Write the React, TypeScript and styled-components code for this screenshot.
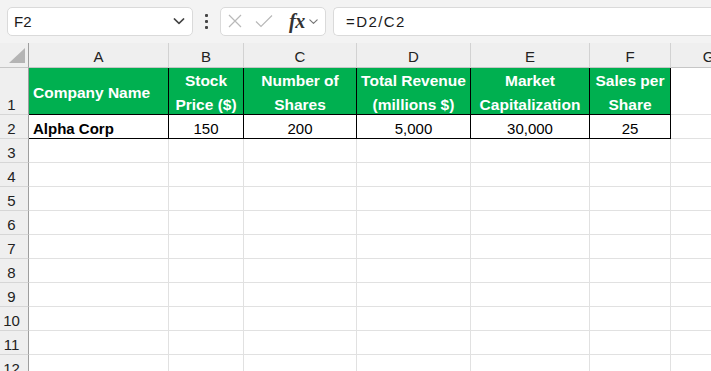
import React from "react";
import styled, { createGlobalStyle } from "styled-components";

const GlobalStyle = createGlobalStyle`
  html, body {
    margin: 0;
    padding: 0;
    background: #ffffff;
    overflow: hidden;
  }
  body {
    font-family: "Liberation Sans", Arial, sans-serif;
    color: #000000;
  }
`;

const Page = styled.div`
  width: 711px;
  height: 371px;
  overflow: hidden;
  background: #ffffff;
`;

const TopBar = styled.div`
  display: flex;
  align-items: center;
  height: 43px;
  padding: 0 0 1px 7px;
  box-sizing: border-box;
  background: #f3f3f3;
`;

const NameBox = styled.div`
  display: flex;
  align-items: center;
  justify-content: space-between;
  width: 186px;
  height: 29px;
  box-sizing: border-box;
  padding: 0 6px 0 6px;
  background: #ffffff;
  border: 1px solid #dadada;
  border-radius: 5px;
  font-size: 15px;
  color: #1a1a1a;
`;

const MoreDots = styled.div`
  display: flex;
  flex-direction: column;
  align-items: center;
  gap: 3px;
  width: 27px;
  > span {
    width: 3px;
    height: 3px;
    background: #444;
    border-radius: 1px;
  }
`;

const FuncBox = styled.div`
  display: flex;
  align-items: center;
  width: 106px;
  height: 29px;
  box-sizing: border-box;
  padding: 0 0 0 6px;
  background: #ffffff;
  border: 1px solid #dadada;
  border-radius: 5px;
`;

const FxLabel = styled.span`
  font-family: "Liberation Serif", "DejaVu Serif", serif;
  font-style: italic;
  font-weight: bold;
  font-size: 20px;
  color: #333333;
  margin-left: 15px;
  margin-right: 3px;
  letter-spacing: -0.5px;
`;

const FormulaInput = styled.div`
  flex: 1;
  display: flex;
  align-items: center;
  height: 29px;
  margin-left: 7px;
  box-sizing: border-box;
  padding-left: 12px;
  background: #ffffff;
  border: 1px solid #dadada;
  border-right: none;
  border-radius: 5px 0 0 5px;
  font-size: 15px;
  color: #1a1a1a;
  letter-spacing: 1.4px;
`;

const Sheet = styled.div`
  display: grid;
  grid-template-columns: 29px 140px 75px 113px 114px 119px 81px 76px;
  grid-template-rows: 25px 47px repeat(11, 24px);
  overflow: hidden;
`;

const Corner = styled.div`
  position: relative;
  background: #efefef;
  border-right: 1px solid #9e9e9e;
  border-bottom: 1px solid #c6c6c6;
  box-sizing: border-box;
`;

const CornerTriangle = styled.div`
  position: absolute;
  right: 3px;
  bottom: 4px;
  width: 0;
  height: 0;
  border-left: 16px solid transparent;
  border-bottom: 15px solid #b4b4b4;
`;

const ColHead = styled.div`
  display: flex;
  align-items: center;
  justify-content: center;
  background: #efefef;
  border-right: 1px solid #d2d2d2;
  border-bottom: 1px solid #c6c6c6;
  box-sizing: border-box;
  font-size: 15px;
  color: #222222;
  padding-top: 2px;
`;

const RowHead = styled.div<{ $bottom?: boolean }>`
  display: flex;
  align-items: ${(p) => (p.$bottom ? "flex-end" : "center")};
  justify-content: center;
  padding-bottom: ${(p) => (p.$bottom ? "1px" : "0")};
  padding-top: ${(p) => (p.$bottom ? "0" : "4px")};
  padding-right: 5px;
  background: #efefef;
  border-right: 1px solid #9e9e9e;
  border-bottom: 1px solid #d6d6d6;
  box-sizing: border-box;
  font-size: 15px;
  color: #222222;
`;

const Cell = styled.div<{
  $kind?: "head" | "data" | "empty";
  $align?: "left" | "center";
}>`
  display: flex;
  align-items: center;
  justify-content: ${(p) => (p.$align === "left" ? "flex-start" : "center")};
  text-align: ${(p) => (p.$align === "left" ? "left" : "center")};
  padding: ${(p) => (p.$align === "left" ? "4px 0 0 4px" : "4px 0 0 0")};
  box-sizing: border-box;
  font-size: ${(p) => (p.$kind === "head" ? "15.5px" : "15px")};
  line-height: 24px;
  white-space: nowrap;
  overflow: hidden;
  background: ${(p) => (p.$kind === "head" ? "#00b050" : "#ffffff")};
  color: ${(p) => (p.$kind === "head" ? "#ffffff" : "#000000")};
  font-weight: ${(p) => (p.$kind === "head" ? "bold" : "normal")};
  border-right: 1px solid
    ${(p) => (p.$kind === "empty" ? "#e1e1e1" : "#000000")};
  border-bottom: 1px solid
    ${(p) => (p.$kind === "empty" ? "#e1e1e1" : "#000000")};
`;

const Bold = styled.span`
  font-weight: bold;
`;

const columns = ["A", "B", "C", "D", "E", "F", "G"];

const headers: string[][] = [
  ["Company Name"],
  ["Stock", "Price ($)"],
  ["Number of", "Shares"],
  ["Total Revenue", "(millions $)"],
  ["Market", "Capitalization"],
  ["Sales per", "Share"],
];

const dataRow = ["Alpha Corp", "150", "200", "5,000", "30,000", "25"];

function Chevron({ size = 12, color = "#555" }: { size?: number; color?: string }) {
  return (
    <svg width={size} height={size} viewBox="0 0 12 12" fill="none">
      <path d="M2 4.2 L6 8 L10 4.2" stroke={color} strokeWidth="1.3" strokeLinecap="round" strokeLinejoin="round" />
    </svg>
  );
}

export default function App() {
  const emptyRows = Array.from({ length: 10 }, (_, i) => i + 3);

  return (
    <Page>
      <GlobalStyle />
      <TopBar>
        <NameBox>
          <span>F2</span>
          <Chevron size={14} color="#444" />
        </NameBox>
        <MoreDots>
          <span />
          <span />
          <span />
        </MoreDots>
        <FuncBox>
          <svg width="16" height="16" viewBox="0 0 16 16" fill="none">
            <path d="M2 2 L14 14 M14 2 L2 14" stroke="#b9b9b9" strokeWidth="1.2" />
          </svg>
          <svg width="20" height="16" viewBox="0 0 20 16" fill="none" style={{ marginLeft: 11 }}>
            <path d="M2 8.5 L7 13.5 L18 2.5" stroke="#b9b9b9" strokeWidth="1.2" />
          </svg>
          <FxLabel>fx</FxLabel>
          <Chevron size={11} color="#777" />
        </FuncBox>
        <FormulaInput>=D2/C2</FormulaInput>
      </TopBar>

      <Sheet>
        <Corner>
          <CornerTriangle />
        </Corner>
        {columns.map((c) => (
          <ColHead key={c}>{c}</ColHead>
        ))}

        <RowHead $bottom>1</RowHead>
        {headers.map((lines, i) => (
          <Cell key={i} $kind="head" $align={i === 0 ? "left" : "center"}>
            <div>
              {lines.map((l, j) => (
                <div key={j}>{l}</div>
              ))}
            </div>
          </Cell>
        ))}
        <Cell $kind="empty" />

        <RowHead>2</RowHead>
        {dataRow.map((v, i) => (
          <Cell key={i} $kind="data" $align={i === 0 ? "left" : "center"}>
            {i === 0 ? <Bold>{v}</Bold> : v}
          </Cell>
        ))}
        <Cell $kind="empty" />

        {emptyRows.map((r) => (
          <React.Fragment key={r}>
            <RowHead>{r}</RowHead>
            {columns.map((c) => (
              <Cell key={c} $kind="empty" />
            ))}
          </React.Fragment>
        ))}
      </Sheet>
    </Page>
  );
}
